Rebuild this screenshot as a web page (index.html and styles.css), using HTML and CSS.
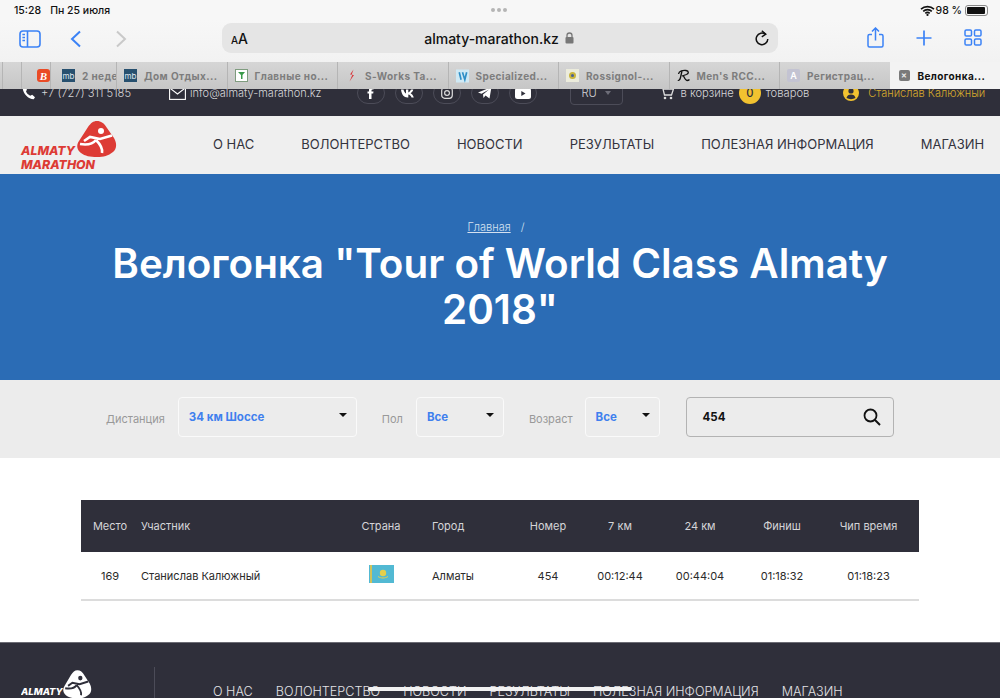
FILE: index.html
```html
<!DOCTYPE html>
<html lang="ru">
<head>
    <meta charset="UTF-8">
    <title>Велогонка "Tour of World Class Almaty 2018"</title>
    <link rel="stylesheet" href="styles.css">
</head>
<body>
<div class="screen">
    <!-- safari chrome -->
    <div class="status-bar">
        <span class="status-time">15:28</span>
        <span class="status-date">Пн 25 июля</span>
        <span class="status-dots"><i></i><i></i><i></i></span>
        <span class="status-right">
            <svg class="wifi" width="15" height="11" viewBox="0 0 15 11"><path d="M1 4.200a9.400 9.400 0 0 1 13 0M3.200 6.400a6.200 6.200 0 0 1 8.600 0M5.300 8.400a3.200 3.200 0 0 1 4.400 0" fill="none" stroke="#111" stroke-width="1.600"/><circle cx="7.500" cy="9.900" r="1.100" fill="#111"/></svg>
            <span>98 %</span>
            <span class="battery"><span class="battery-fill"></span></span>
        </span>
    </div>
    <div class="toolbar">
        <div class="tool-left">
            <svg width="22" height="18" viewBox="0 0 22 18"><rect x="1" y="1" width="20" height="16" rx="3" fill="none" stroke="#3b82f6" stroke-width="1.600"/><path d="M8.500 1v16" stroke="#3b82f6" stroke-width="1.600"/><path d="M3.400 4.500h2.600M3.400 7.500h2.600M3.400 10.500h2.600" stroke="#3b82f6" stroke-width="1.300"/></svg>
            <svg class="back" width="12" height="18" viewBox="0 0 12 18"><path d="M10 1.500 2 9l8 7.500" fill="none" stroke="#3b82f6" stroke-width="2"/></svg>
            <svg class="forward" width="12" height="18" viewBox="0 0 12 18"><path d="M2 1.500 10 9l-8 7.500" fill="none" stroke="#c9c9c9" stroke-width="2"/></svg>
        </div>
        <div class="address">
            <span class="aa"><small>A</small>A</span>
            <span class="url">almaty-marathon.kz
                <svg width="9" height="12" viewBox="0 0 9 12"><path d="M2 5.500V3.500a2.500 2.500 0 0 1 5 0v2" fill="none" stroke="#777" stroke-width="1.300"/><rect x="0.500" y="5" width="8" height="6.500" rx="1" fill="#777"/></svg>
            </span>
            <svg class="reload" width="14" height="16" viewBox="0 0 14 16"><path d="M10.600 4.300A5.800 5.800 0 1 0 12.800 9" fill="none" stroke="#111" stroke-width="1.500"/><path d="M6.800 0.800 10.800 4.200 6.800 6.800" fill="none" stroke="#111" stroke-width="1.400"/></svg>
        </div>
        <div class="tool-right">
            <svg width="17" height="21" viewBox="0 0 17 21"><path d="M5 7.500H2.500A1.500 1.500 0 0 0 1 9v9.500A1.500 1.500 0 0 0 2.500 20h12a1.500 1.500 0 0 0 1.500-1.500V9a1.500 1.500 0 0 0-1.500-1.500H12M8.500 13.500V1.500M5 4.500l3.500-3.500L12 4.500" fill="none" stroke="#3b82f6" stroke-width="1.500"/></svg>
            <svg width="16" height="16" viewBox="0 0 16 16"><path d="M8 0.500v15M0.500 8h15" stroke="#3b82f6" stroke-width="1.700"/></svg>
            <svg width="18" height="17" viewBox="0 0 18 17"><g fill="none" stroke="#3b82f6" stroke-width="1.500"><rect x="1" y="1" width="6.500" height="6" rx="1.300"/><rect x="10.500" y="1" width="6.500" height="6" rx="1.300"/><rect x="1" y="10" width="6.500" height="6" rx="1.300"/><rect x="10.500" y="10" width="6.500" height="6" rx="1.300"/></g></svg>
        </div>
    </div>
    <div class="tabs">
        <div class="tab tab-stub-a"></div>
        <div class="tab tab-stub-b"><span class="fav fav-b">B</span></div>
        <div class="tab tab-stub-c"><span class="fav fav-mb">mb</span><span class="tab-text">2 неде</span></div>
        <div class="tab"><span class="fav fav-mb">mb</span><span class="tab-text">Дом Отдых...</span></div>
        <div class="tab"><span class="fav fav-news"><svg width="13" height="13" viewBox="0 0 13 13"><path d="M3 3h7L7.500 6v4H6V6z" fill="#3a9a4a"/></svg></span><span class="tab-text">Главные но...</span></div>
        <div class="tab"><span class="fav fav-plain"><svg width="7" height="13" viewBox="0 0 7 13"><path d="M5.500 0.500 2 5.500h2.500L1.500 12.500 6 6H3.500z" fill="#d9363a"/></svg></span><span class="tab-text">S-Works Ta...</span></div>
        <div class="tab"><span class="fav fav-spec"><svg width="14" height="14" viewBox="0 0 14 14"><rect width="14" height="14" fill="#cfe9f5"/><path d="M3.500 3 5.500 11M7 3l2.500 8 2-8" fill="none" stroke="#2f8fc7" stroke-width="1.800"/></svg></span><span class="tab-text">Specialized...</span></div>
        <div class="tab"><span class="fav fav-ros"><svg width="13" height="13" viewBox="0 0 13 13"><rect width="13" height="13" fill="#ececdc"/><circle cx="6.500" cy="6.500" r="3.500" fill="#c9b43c"/><circle cx="6.500" cy="6.500" r="1.500" fill="#47609a"/></svg></span><span class="tab-text">Rossignol-...</span></div>
        <div class="tab"><span class="fav fav-plain"><svg width="13" height="13" viewBox="0 0 13 13"><path d="M1.500 5C2 2 6 1 9 1.500c3 .5 3 3 .5 4L5 7M5 2 3.500 8.500C3 11 1.500 12 1 11M6.500 7c1 2 2 4.500 3.500 4.500s2-.5 2.500-1" fill="none" stroke="#111" stroke-width="1.300"/></svg></span><span class="tab-text">Men's RCC...</span></div>
        <div class="tab"><span class="fav fav-a">A</span><span class="tab-text">Регистрац...</span></div>
        <div class="tab tab-active"><span class="tab-close">✕</span><span class="tab-text">Велогонка...</span></div>
    </div>

    <!-- site -->
    <div class="topbar">
        <div class="topbar-row">
            <span class="contact contact-phone">
                <svg width="14" height="14" viewBox="0 0 14 14"><path d="M2.500 0.800 5 3.500 4 5.500c.8 1.800 2.200 3.200 4.200 4.200l2-1 2.800 2.500-1.300 2C6 13 1 7.500.8 2.500z" fill="#fff"/></svg>
                +7 (727) 311 5185
            </span>
            <span class="contact contact-mail">
                <svg width="17" height="13" viewBox="0 0 17 13"><rect x="0.600" y="0.600" width="15.800" height="11.800" fill="none" stroke="#fff" stroke-width="1.100"/><path d="M.8 1l7.700 6 7.700-6" fill="none" stroke="#fff" stroke-width="1.100"/></svg>
                info@almaty-marathon.kz
            </span>
            <div class="socials">
                <span class="pill"><svg width="7" height="12" viewBox="0 0 7 12"><path d="M2 12V6.500H.5V4.500H2V3C2 1 3 .5 6.500.5v2c-2 0-2 0-2 2h2l-.3 2H4.500V12z" fill="#fff"/></svg></span>
                <span class="pill"><svg width="15" height="9" viewBox="0 0 15 9"><path d="M0 .5h2.500c.5 2 1.500 3.500 2.500 4V.5h2.300v3c1-.3 2-1.500 2.700-3h2.300c-.4 1.700-1.500 3-2.700 3.800 1.300.7 2.500 2 3.200 4.200H10.500C10 6.800 8.800 5.700 7.300 5.500v3H6.500C3 8.500.5 5.500 0 .5z" fill="#fff"/></svg></span>
                <span class="pill"><svg width="12" height="12" viewBox="0 0 12 12"><rect x="0.700" y="0.700" width="10.600" height="10.600" rx="3" fill="none" stroke="#ddd" stroke-width="1.200"/><circle cx="6" cy="6" r="2.400" fill="none" stroke="#ddd" stroke-width="1.200"/></svg></span>
                <span class="pill"><svg width="14" height="12" viewBox="0 0 14 12"><path d="M0 5.500 13.500 0 11.500 11.500 7.500 8.500 5.500 11 5 7.500 11 2.500 3.500 6.800z" fill="#fff"/></svg></span>
                <span class="pill"><svg width="16" height="11" viewBox="0 0 16 11"><rect width="16" height="11" rx="2.500" fill="#fff"/><path d="M6.300 3 10.500 5.500 6.300 8z" fill="#2f2f3a"/></svg></span>
            </div>
            <span class="lang">RU <i class="lang-caret"></i></span>
            <span class="cart">
                <svg width="14" height="14" viewBox="0 0 14 14"><path d="M0 1h2.500l2 8h7L13.500 3H3.300" fill="none" stroke="#ddd" stroke-width="1.300"/><circle cx="5" cy="12" r="1.300" fill="#ddd"/><circle cx="11" cy="12" r="1.300" fill="#ddd"/></svg>
                <span class="cart-label">в корзине</span><b class="badge">0</b><span>товаров</span>
            </span>
            <span class="user">
                <svg width="16" height="16" viewBox="0 0 16 16"><circle cx="8" cy="8" r="8" fill="#f2c230"/><circle cx="8" cy="6" r="2.600" fill="#2f2f3a"/><path d="M3.500 13c.5-2.500 2.300-3.500 4.500-3.500s4 1 4.500 3.500c-2.500 1.500-6.500 1.500-9 0z" fill="#2f2f3a"/></svg>
                Станислав Калюжный
            </span>
        </div>
    </div>
    <header class="site-header">
        <svg class="logo" width="100" height="52" viewBox="0 0 100 52">
            <path d="M77 1C81 1 84 3 87 8L94 18C97 23 97 29 93 32C88 36 84 37 77 37C70 37 65 36 61 33C57 30 56 25 59 21L68 7C71 3 73 1 77 1Z" fill="#dd3b35"/>
            <circle cx="81" cy="11" r="3" fill="#fff"/>
            <path d="M92 15.500 80 19 70 17 64 21M76 20C72 25 66 25 60 24M76 20C80 24 83 28 82 33" fill="none" stroke="#fff" stroke-width="2.600"/>
            <text class="logo-text" x="1" y="34.500">ALMATY</text>
            <text class="logo-text" x="1" y="48.500">MARATHON</text>
        </svg>
        <nav class="main-nav">
            <a>О НАС</a><a>ВОЛОНТЕРСТВО</a><a>НОВОСТИ</a><a>РЕЗУЛЬТАТЫ</a><a>ПОЛЕЗНАЯ ИНФОРМАЦИЯ</a><a>МАГАЗИН</a>
        </nav>
    </header>
    <section class="hero">
        <div class="crumbs"><a>Главная</a><span>/</span></div>
        <h1>Велогонка "Tour of World Class Almaty 2018"</h1>
    </section>
    <section class="filters">
        <span class="filter-label">Дистанция</span>
        <div class="select select-dist">34 км Шоссе<i class="caret"></i></div>
        <span class="filter-label">Пол</span>
        <div class="select select-sex">Все<i class="caret"></i></div>
        <span class="filter-label">Возраст</span>
        <div class="select select-age">Все<i class="caret"></i></div>
        <div class="search">454
            <svg width="18" height="18" viewBox="0 0 18 18"><circle cx="7.500" cy="7.500" r="6" fill="none" stroke="#111" stroke-width="1.800"/><path d="M12 12l5 5" stroke="#111" stroke-width="2"/></svg>
        </div>
    </section>
    <main class="results">
        <table>
            <colgroup>
                <col class="c-place"><col class="c-name"><col class="c-country"><col class="c-city"><col class="c-num"><col class="c-km7"><col class="c-km24"><col class="c-fin"><col class="c-chip">
            </colgroup>
            <thead>
                <tr>
                    <th>Место</th><th class="left">Участник</th><th>Страна</th><th class="left city">Город</th><th>Номер</th><th>7 км</th><th>24 км</th><th>Финиш</th><th>Чип время</th>
                </tr>
            </thead>
            <tbody>
                <tr>
                    <td>169</td>
                    <td class="left">Станислав Калюжный</td>
                    <td><svg class="flag" width="25" height="18" viewBox="0 0 25 18"><rect width="25" height="18" fill="#52b9d3"/><path d="M2 0v18" stroke="#cfc25a" stroke-width="2"/><circle cx="14" cy="8" r="3.200" fill="#e4cf4a"/><path d="M9 11.500c3 2 7 2 10 0" fill="none" stroke="#e4cf4a" stroke-width="1"/></svg></td>
                    <td class="left city">Алматы</td>
                    <td>454</td><td>00:12:44</td><td>00:44:04</td><td>01:18:32</td><td>01:18:23</td>
                </tr>
            </tbody>
        </table>
    </main>
    <footer class="site-footer">
        <svg class="foot-logo" width="76" height="34" viewBox="0 0 76 34">
            <g transform="translate(1 2.500) scale(.72 .78)">
                <path d="M77 1C81 1 84 3 87 8L94 18C97 23 97 29 93 32C88 36 84 37 77 37C70 37 65 36 61 33C57 30 56 25 59 21L68 7C71 3 73 1 77 1Z" fill="#fff"/>
                <circle cx="81" cy="11" r="3" fill="#2f2f3a"/>
                <path d="M92 15.500 80 19 70 17 64 21M76 20C72 25 66 25 60 24M76 20C80 24 83 28 82 33" fill="none" stroke="#2f2f3a" stroke-width="2.600"/>
            </g>
            <text class="foot-logo-text" x="0" y="28">ALMATY</text>
        </svg>
        <nav class="foot-nav">
            <a>О НАС</a><a>ВОЛОНТЕРСТВО</a><a>НОВОСТИ</a><a>РЕЗУЛЬТАТЫ</a><a>ПОЛЕЗНАЯ ИНФОРМАЦИЯ</a><a>МАГАЗИН</a>
        </nav>
    </footer>
    <div class="home-indicator"></div>
</div>
</body>
</html>
```

FILE: styles.css
```css
/* page */
html, body {
    margin: 0;
    padding: 0;
}

body {
    font-family: Inter, "Liberation Sans", sans-serif;
    background-color: #fff;
    color: #222;
}

.screen {
    position: relative;
    width: 1000px;
    height: 698px;
    overflow: hidden;
    display: flex;
    flex-direction: column;
}

.screen > * {
    flex-shrink: 0;
}

/* status bar */
.status-bar {
    height: 20px;
    padding: 0 12px 0 14px;
    display: flex;
    align-items: center;
    font-size: 10.500px;
    font-weight: 500;
    color: #111;
    background-color: #f7f7f7;
    position: relative;
}

.status-date {
    margin-left: 9px;
}

.status-dots {
    position: absolute;
    left: 491px;
    top: 8px;
    display: flex;
    gap: 2px;
}

.status-dots i {
    width: 4px;
    height: 4px;
    border-radius: 50%;
    background-color: #b5b5b5;
}

.status-right {
    margin-left: auto;
    display: flex;
    align-items: center;
    gap: 3px;
    font-size: 10.500px;
}

.wifi {
    margin-right: -2px;
}

.battery {
    width: 19px;
    height: 7px;
    border: 1px solid #888;
    border-radius: 3px;
    padding: 1px;
    display: block;
}

.battery-fill {
    display: block;
    height: 100%;
    width: 96%;
    background-color: #111;
    border-radius: 1px;
}

/* toolbar */
.toolbar {
    height: 42px;
    display: flex;
    align-items: flex-start;
    background-color: #f7f7f7;
    background-image: linear-gradient(#f7f7f7, #f2f2f2);
}

.tool-left {
    width: 222px;
    padding: 10px 0 0 19px;
    box-sizing: border-box;
    display: flex;
    align-items: center;
}

.back {
    margin-left: 29px;
}

.forward {
    margin-left: 33px;
}

.address {
    width: 556px;
    height: 30px;
    margin-top: 3px;
    padding: 0 9px;
    box-sizing: border-box;
    display: flex;
    align-items: center;
    justify-content: space-between;
    background-color: #e5e5e5;
    border-radius: 9px;
}

.aa {
    font-size: 14px;
    font-weight: 500;
    color: #111;
}

.aa small {
    font-size: 10px;
}

.url {
    font-size: 14px;
    font-weight: 500;
    color: #111;
    display: flex;
    align-items: center;
    gap: 6px;
    margin-left: -5px;
}

.tool-right {
    flex: 1;
    padding: 7px 18px 0 89px;
    box-sizing: border-box;
    display: flex;
    align-items: center;
    justify-content: space-between;
}

/* tab strip */
.tabs {
    height: 27px;
    display: flex;
    background-image: linear-gradient(#d6d6d6, #c6c6c6);
    font-size: 10px;
    font-weight: 700;
    letter-spacing: 0.4px;
    color: #7d7d7d;
    white-space: nowrap;
    z-index: 1;
}

.tab {
    width: 110.500px;
    padding-left: 7px;
    box-sizing: border-box;
    display: flex;
    align-items: center;
    gap: 7px;
    overflow: hidden;
    border-left: 1px solid #b5b5b5;
}

.tab-stub-a {
    width: 19px;
    margin-left: 2px;
}

.tab-stub-b {
    width: 29px;
    padding-left: 15px;
}

.tab-stub-c {
    width: 66px;
    padding-left: 11px;
}

.tab-active {
    flex: 1;
    width: auto;
    padding-left: 9px;
    gap: 8px;
    border-left: 0;
    background-color: #f3f3f3;
    color: #111;
}

.fav {
    width: 13px;
    height: 13px;
    flex-shrink: 0;
    display: flex;
    align-items: center;
    justify-content: center;
    letter-spacing: 0;
    font-weight: 400;
}

.fav-b {
    background-color: #ea4b26;
    border-radius: 3px;
    color: #fff;
    font: italic 700 11px "Liberation Serif", serif;
}

.fav-mb {
    background-color: #27506f;
    color: #dfe7ee;
    font-size: 8px;
}

.fav-news {
    background-color: #fff;
    box-shadow: inset 0 0 0 1px #7f9c7f;
}

.fav-a {
    background-color: #c3c3d2;
    color: #fff;
    font-size: 9px;
    font-weight: 600;
    border-radius: 2px;
}

.tab-close {
    width: 11px;
    height: 11px;
    border-radius: 2px;
    background-color: #7a7a7a;
    color: #eee;
    font-size: 7px;
    letter-spacing: 0;
    display: flex;
    align-items: center;
    justify-content: center;
    flex-shrink: 0;
}

/* site top bar, scrolled partly under the browser tabs */
.topbar {
    height: 27px;
    overflow: hidden;
    background-color: #2f2f3a;
    color: #d5d5d8;
    font-size: 11.200px;
    font-weight: 300;
}

.topbar-row {
    height: 30px;
    margin-top: -11px;
    padding-left: 22px;
    display: flex;
    align-items: center;
    white-space: nowrap;
}

.contact {
    display: flex;
    align-items: center;
    gap: 5px;
}

.contact-mail {
    margin-left: 38px;
    gap: 4px;
    font-size: 11px;
}

.socials {
    margin-left: 35px;
    display: flex;
    gap: 10px;
}

.pill {
    width: 28px;
    height: 22px;
    border: 1px solid #4c4c58;
    border-radius: 11px;
    box-sizing: border-box;
    display: flex;
    align-items: center;
    justify-content: center;
}

.lang {
    width: 53px;
    height: 24px;
    margin-left: 33px;
    padding-left: 11px;
    box-sizing: border-box;
    border: 1px solid #4c4c58;
    border-radius: 4px;
    display: flex;
    align-items: center;
    gap: 8px;
}

.lang-caret {
    border: 3.500px solid transparent;
    border-top: 4px solid #6d6d78;
    border-bottom: 0;
}

.cart {
    margin-left: 37px;
    display: flex;
    align-items: center;
    gap: 5px;
}

.cart-label {
    margin-left: 2px;
}

.badge {
    width: 22px;
    height: 22px;
    border-radius: 50%;
    background-color: #f2c230;
    color: #2f2f3a;
    font-weight: 500;
    display: flex;
    align-items: center;
    justify-content: center;
}

.user {
    margin-left: 34px;
    display: flex;
    align-items: center;
    gap: 9px;
    color: #d7a92c;
    font-size: 11px;
}

/* site header */
.site-header {
    height: 58px;
    padding-left: 20px;
    display: flex;
    align-items: center;
    background-color: #efefef;
}

.logo {
    margin-top: 1px;
}

.logo-text {
    font: italic 800 12.300px Inter, "Liberation Sans", sans-serif;
    fill: #dd3b35;
}

.main-nav {
    margin: 0 0 2px 93px;
    display: flex;
    gap: 47px;
    font-size: 13px;
    color: #33333d;
    white-space: nowrap;
}

/* hero */
.hero {
    height: 206px;
    padding-top: 46px;
    box-sizing: border-box;
    background-color: #2b6cb5;
    color: #fff;
    text-align: center;
}

.crumbs {
    height: 14px;
    padding-right: 8px;
    display: flex;
    justify-content: center;
    gap: 10px;
    font-size: 11px;
    font-weight: 300;
    color: #d5e1f0;
}

.crumbs a {
    text-decoration: underline;
}

.hero h1 {
    width: 800px;
    margin: 7px auto 0;
    font-size: 40.400px;
    line-height: 46px;
    font-weight: 600;
}

/* filters */
.filters {
    height: 78px;
    padding: 0 0 4px 106px;
    box-sizing: border-box;
    display: flex;
    align-items: center;
    background-color: #ececec;
}

.filter-label {
    margin-top: 4px;
    font-size: 11px;
    color: #999;
}

.select {
    position: relative;
    height: 40px;
    padding: 0 0 1px 10px;
    box-sizing: border-box;
    display: flex;
    align-items: center;
    border: 1px solid #fafafa;
    border-radius: 4px;
    font-size: 11.500px;
    font-weight: 700;
    color: #3f80ee;
}

.caret {
    position: absolute;
    right: 9px;
    top: 15px;
    border: 4px solid transparent;
    border-top: 4px solid #111;
    border-bottom: 0;
}

.select-dist {
    width: 179px;
    margin: 0 25px 0 13px;
}

.select-sex {
    width: 88px;
    margin: 0 25px 0 13px;
}

.select-age {
    width: 75px;
    margin: 0 26px 0 12px;
}

.search {
    width: 208px;
    height: 40px;
    padding: 0 12px 0 16px;
    box-sizing: border-box;
    display: flex;
    align-items: center;
    justify-content: space-between;
    border: 1px solid #b3b3b3;
    border-radius: 4px;
    font-size: 11.500px;
    font-weight: 700;
    color: #111;
}

/* results table */
.results {
    height: 184px;
    padding: 42px 81px 0;
    box-sizing: border-box;
    background-color: #fff;
}

table {
    width: 838px;
    table-layout: fixed;
    border-collapse: collapse;
    font-size: 11px;
}

.c-place { width: 58px; }
.c-name { width: 213px; }
.c-country { width: 58px; }
.c-city { width: 100px; }
.c-num { width: 76px; }
.c-km7 { width: 68px; }
.c-km24 { width: 92px; }
.c-fin { width: 72px; }
.c-chip { width: 101px; }

th {
    height: 52px;
    padding: 0;
    font-weight: 400;
    color: #d5d5d8;
    background-color: #2f2f3a;
    text-align: center;
}

td {
    height: 47px;
    padding: 0;
    color: #2a2a2a;
    text-align: center;
    border-bottom: 2px solid #dcdcdc;
}

.left {
    text-align: left;
    padding-left: 2px;
}

.city {
    padding-left: 22px;
}

.flag {
    display: block;
    margin: 0 auto 3px;
}

/* footer */
.site-footer {
    flex: 1;
    padding-left: 21px;
    display: flex;
    align-items: flex-start;
    background-color: #2f2f3a;
    border-top: 1px solid #6c6c74;
    overflow: hidden;
}

.foot-logo {
    margin-top: 24px;
    padding-right: 57px;
    border-right: 1px solid #4c4c58;
}

.foot-logo-text {
    font: italic 800 9.500px Inter, "Liberation Sans", sans-serif;
    fill: #fff;
}

.foot-nav {
    margin: 41px 0 0 58px;
    display: flex;
    gap: 23px;
    font-size: 12.600px;
    font-weight: 300;
    color: #e2e2e5;
    white-space: nowrap;
}

.home-indicator {
    position: absolute;
    left: 368px;
    top: 687px;
    width: 264px;
    height: 4px;
    border-radius: 2px;
    background-color: #f2f2f2;
}
```
